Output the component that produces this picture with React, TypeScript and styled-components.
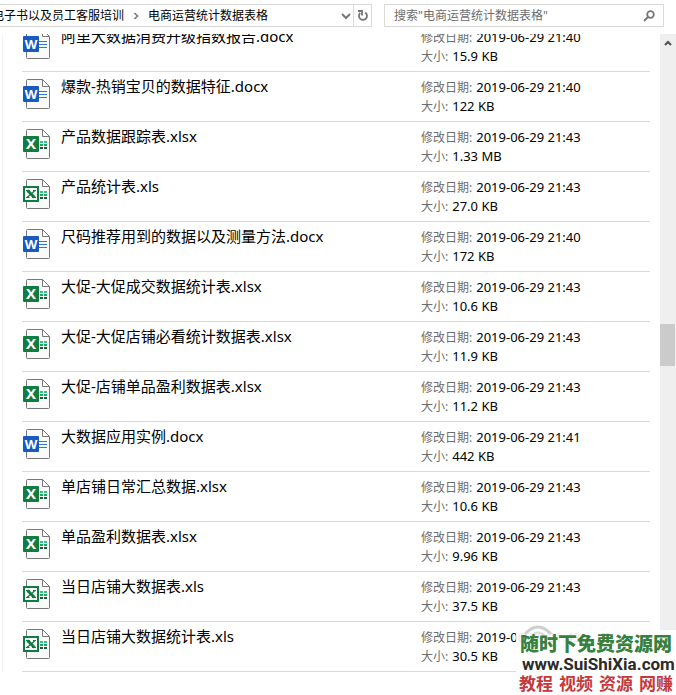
import React from "react";
import styled, { createGlobalStyle } from "styled-components";

const GlobalStyle = createGlobalStyle`
  * { box-sizing: border-box; }
  body {
    margin: 0;
    background: #fff;
    color: #000;
    font-family: "Noto Sans", "Noto Sans CJK SC", sans-serif;
    font-size: 12px;
    overflow: hidden;
  }
  button, input { font: inherit; color: inherit; }
  button { border: 0; padding: 0; background: none; }
`;

const Window = styled.div`
  position: relative;
  display: flex;
  flex-direction: column;
  height: 100vh;
`;

const Toolbar = styled.header`
  display: flex;
  flex: none;
  gap: 12px;
  padding: 4px 12px 7px 0;
`;

const AddressBar = styled.nav`
  display: flex;
  flex: 1;
  min-width: 0;
  height: 23px;
  border: 1px solid #d9d9d9;
  border-left: 0;
  overflow: hidden;
`;

const Crumbs = styled.div`
  display: flex;
  flex: 1;
  align-items: center;
  gap: 8px;
  margin-left: -8px;
  min-width: 0;
`;

const Crumb = styled.button`
  flex: none;
  line-height: 20px;
  white-space: nowrap;
`;

const BarButton = styled.button<{ $divided?: boolean }>`
  display: grid;
  place-items: center;
  flex: none;
  width: ${(p) => (p.$divided ? 18 : 14)}px;
  border-left: ${(p) => (p.$divided ? "1px solid #d9d9d9" : "0")};
`;

const SearchBox = styled.label`
  display: flex;
  flex: 0 1 280px;
  align-items: center;
  min-width: 0;
  height: 23px;
  padding: 0 8px 0 9px;
  border: 1px solid #d9d9d9;
`;

const SearchInput = styled.input`
  flex: 1;
  min-width: 0;
  padding: 0;
  border: 0;
  outline: 0;
  background: none;
  &::placeholder { color: #6d6d6d; opacity: 1; }
`;

const Body = styled.main`
  display: flex;
  flex: 1;
  min-height: 0;
`;

const Viewport = styled.div`
  flex: 1;
  align-self: flex-start;
  min-width: 0;
  max-height: 100%;
  margin-left: 2px;
  border-left: 1px solid #f3f3f3;
  overflow: hidden;
`;

const FileList = styled.ul`
  list-style: none;
  margin: -12px 10px 0 19px;
  padding: 0;
`;

const FileRow = styled.li`
  display: grid;
  grid-template-columns: 39px 360px minmax(0, 1fr);
  height: 50px;
  padding-top: 4px;
  border-bottom: 1px solid #d9d9d9;
`;

const IconCell = styled.span`
  padding-top: 2px;
  svg { display: block; }
`;

const FileName = styled.span`
  font-size: 15px;
  line-height: 20px;
  white-space: nowrap;
`;

const Meta = styled.dl`
  margin: 0;
  padding-top: 2px;
`;

const MetaLine = styled.div`
  display: flex;
  align-items: baseline;
  gap: 4px;
  height: 19px;
  line-height: 19px;
  white-space: nowrap;
`;

const MetaLabel = styled.dt`
  color: #6d6d6d;
`;

const MetaValue = styled.dd`
  margin: 0;
  font-size: 13px;
`;

const ScrollTrack = styled.div`
  display: flex;
  flex-direction: column;
  flex: none;
  width: 16px;
  background: #efefef;
`;

const ScrollButton = styled.button`
  display: grid;
  place-items: center;
  height: 18px;
`;

const ScrollSpace = styled.div<{ $grow: number }>`
  flex: ${(p) => p.$grow} 1 0;
`;

const Thumb = styled.div`
  height: 42px;
  margin-right: 1px;
  background: #cbcbcb;
`;

const Watermark = styled.aside`
  position: absolute;
  right: 0;
  bottom: 0;
  width: 160px;
  height: 65px;
  padding-left: 3px;
  background: rgba(255, 255, 255, 0.9);
  white-space: nowrap;
`;

const Emblem = styled.svg`
  position: absolute;
  left: 4px;
  top: -6px;
`;

const SiteName = styled.div`
  position: relative;
  padding-left: 1px;
  color: #37803d;
  font: 900 19px/25px "Noto Sans CJK SC", sans-serif;
`;

const SiteAddress = styled.div`
  position: relative;
  padding-left: 3px;
  color: #2b2b2b;
  font: bold 17px/18px Roboto, sans-serif;
`;

const SiteTopics = styled.div`
  position: relative;
  display: flex;
  gap: 6px;
  color: #c4393c;
  font: bold 17px/20px "Noto Sans CJK SC", sans-serif;
`;

type Kind = "word" | "xlsx" | "xls";

function FileIcon({ kind }: { kind: Kind }) {
  return (
    <svg width="28" height="31" viewBox="0 0 28 31" aria-hidden="true">
      <path d="M5.5 1.5H20.5L27.5 8.5V29.5Q27.5 30.5 26.5 30.5H5.5Q4.5 30.5 4.5 29.5V2.5Q4.5 1.5 5.5 1.5Z" fill="#fafafa" stroke="#777" />
      <path d="M20.5 1.5V8.5H27.5Z" fill="#fff" stroke="#777" />
      {kind === "word" ? (
        <>
          <path d="M17 13.5H25M17 16.5H25M17 19.5H25" stroke="#2b7cd3" />
          <rect x="1" y="8" width="16" height="16" rx="1" fill="#185abd" />
          <text x="9" y="21" textAnchor="middle" fill="#fff" fontFamily="Open Sans, sans-serif" fontWeight="700" fontSize="13">W</text>
        </>
      ) : (
        <>
          <path d="M18 13h3v2h-3zM22 13h3v2h-3z" fill="#33c481" />
          <path d="M18 16h3v2h-3zM22 16h3v2h-3z" fill="#21a366" />
          <path d="M18 19h3v2h-3zM22 19h3v2h-3z" fill="#185c37" />
          {kind === "xlsx" ? (
            <>
              <rect x="1" y="8" width="16" height="16" rx="1" fill="#107c41" />
              <text x="9" y="21" textAnchor="middle" fill="#fff" fontFamily="Open Sans, sans-serif" fontWeight="700" fontSize="15">X</text>
            </>
          ) : (
            <>
              <rect x="2" y="9" width="14" height="14" fill="#fff" stroke="#107c41" strokeWidth="2" />
              <path d="M5.5 12.5L12.5 19.5" stroke="#107c41" strokeWidth="3" />
              <path d="M13 12.5L5 19.5" stroke="#107c41" strokeWidth="1.3" />
              <path d="M4 12.5H8M11 12.5H14M4 19.5H7.5M10 19.5H14" stroke="#107c41" />
            </>
          )}
        </>
      )}
    </svg>
  );
}

const files: { name: string; kind: Kind; date: string; size: string }[] = [
  { name: "阿里大数据消费升级指数报告.docx", kind: "word", date: "2019-06-29 21:40", size: "15.9 KB" },
  { name: "爆款-热销宝贝的数据特征.docx", kind: "word", date: "2019-06-29 21:40", size: "122 KB" },
  { name: "产品数据跟踪表.xlsx", kind: "xlsx", date: "2019-06-29 21:43", size: "1.33 MB" },
  { name: "产品统计表.xls", kind: "xls", date: "2019-06-29 21:43", size: "27.0 KB" },
  { name: "尺码推荐用到的数据以及测量方法.docx", kind: "word", date: "2019-06-29 21:40", size: "172 KB" },
  { name: "大促-大促成交数据统计表.xlsx", kind: "xlsx", date: "2019-06-29 21:43", size: "10.6 KB" },
  { name: "大促-大促店铺必看统计数据表.xlsx", kind: "xlsx", date: "2019-06-29 21:43", size: "11.9 KB" },
  { name: "大促-店铺单品盈利数据表.xlsx", kind: "xlsx", date: "2019-06-29 21:43", size: "11.2 KB" },
  { name: "大数据应用实例.docx", kind: "word", date: "2019-06-29 21:41", size: "442 KB" },
  { name: "单店铺日常汇总数据.xlsx", kind: "xlsx", date: "2019-06-29 21:43", size: "10.6 KB" },
  { name: "单品盈利数据表.xlsx", kind: "xlsx", date: "2019-06-29 21:43", size: "9.96 KB" },
  { name: "当日店铺大数据表.xls", kind: "xls", date: "2019-06-29 21:43", size: "37.5 KB" },
  { name: "当日店铺大数据统计表.xls", kind: "xls", date: "2019-06-29 21:43", size: "30.5 KB" },
];

const topics = ["教程", "视频", "资源", "网赚"];

export default function App() {
  return (
    <>
      <GlobalStyle />
      <Window>
        <Toolbar>
          <AddressBar aria-label="地址">
            <Crumbs>
              <Crumb>电子书以及员工客服培训</Crumb>
              <svg width="8" height="8" viewBox="0 0 8 8" fill="none" aria-hidden="true">
                <path d="M2.5 1L5.5 4L2.5 7" stroke="#777" strokeWidth="1.5" />
              </svg>
              <Crumb>电商运营统计数据表格</Crumb>
            </Crumbs>
            <BarButton aria-label="展开">
              <svg width="10" height="8" viewBox="0 0 10 8" fill="none">
                <path d="M1 2L5 6L9 2" stroke="#777" strokeWidth="2" />
              </svg>
            </BarButton>
            <BarButton $divided aria-label="刷新">
              <svg width="12" height="13" viewBox="0 0 12 13" fill="none">
                <path d="M8.3 3.6A4 4 0 1 1 3.2 4" stroke="#777" strokeWidth="1.8" />
                <path d="M1 2H5V6.5" stroke="#777" strokeWidth="1.8" />
              </svg>
            </BarButton>
          </AddressBar>
          <SearchBox>
            <SearchInput type="search" aria-label="搜索" placeholder={'搜索"电商运营统计数据表格"'} />
            <svg width="12" height="12" viewBox="0 0 12 12" fill="none" aria-hidden="true">
              <circle cx="7.5" cy="4.5" r="3.3" stroke="#777" strokeWidth="1.8" />
              <path d="M5 7L1 11" stroke="#777" strokeWidth="2" />
            </svg>
          </SearchBox>
        </Toolbar>
        <Body>
          <Viewport>
            <FileList>
              {files.map((file) => (
                <FileRow key={file.name}>
                  <IconCell>
                    <FileIcon kind={file.kind} />
                  </IconCell>
                  <FileName>{file.name}</FileName>
                  <Meta>
                    <MetaLine>
                      <MetaLabel>修改日期:</MetaLabel>
                      <MetaValue>{file.date}</MetaValue>
                    </MetaLine>
                    <MetaLine>
                      <MetaLabel>大小:</MetaLabel>
                      <MetaValue>{file.size}</MetaValue>
                    </MetaLine>
                  </Meta>
                </FileRow>
              ))}
            </FileList>
          </Viewport>
          <ScrollTrack>
            <ScrollButton aria-label="向上滚动">
              <svg width="8" height="6" viewBox="0 0 8 6" fill="none">
                <path d="M1 5L4 2L7 5" stroke="#505050" strokeWidth="2" />
              </svg>
            </ScrollButton>
            <ScrollSpace $grow={272} />
            <Thumb />
            <ScrollSpace $grow={329} />
          </ScrollTrack>
        </Body>
        <Watermark>
          <Emblem width="36" height="44" viewBox="0 0 36 44" fill="none" aria-hidden="true">
            <path d="M5 10Q18 -4 31 10" stroke="#cfcfcf" strokeWidth="3" />
            <path d="M11 12Q18 5 25 12" stroke="#dcdcdc" strokeWidth="2" />
          </Emblem>
          <SiteName>随时下免费资源网</SiteName>
          <SiteAddress>www.SuiShiXia.com</SiteAddress>
          <SiteTopics>
            {topics.map((topic) => (
              <span key={topic}>{topic}</span>
            ))}
          </SiteTopics>
        </Watermark>
      </Window>
    </>
  );
}
